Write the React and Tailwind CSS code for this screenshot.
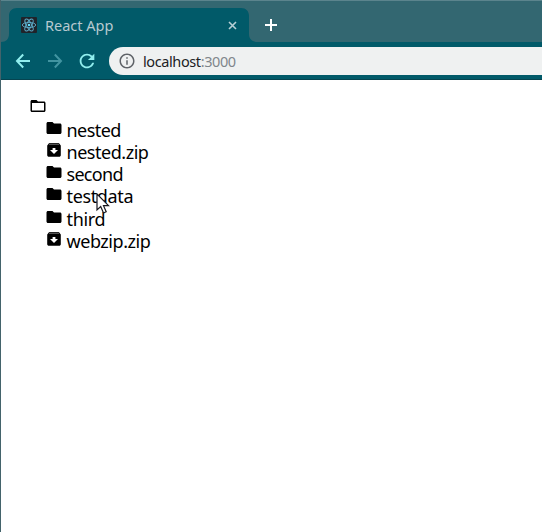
import React from "react";
import { MdFolder, MdFolderOpen, MdInfoOutline, MdRefresh } from "react-icons/md";

const entries = [
  { name: "nested", type: "folder", style: "tracking-[-0.55px]" },
  { name: "nested.zip", type: "archive", style: "tracking-[-0.47px]" },
  { name: "second", type: "folder", style: "tracking-[-0.7px]" },
  { name: "testdata", type: "folder", style: "tracking-[-0.35px]" },
  { name: "third", type: "folder", style: "tracking-[-0.35px]" },
  { name: "webzip.zip", type: "archive", style: "tracking-[-0.45px]" },
];

function ReactLogo() {
  return (
    <svg className="size-4 shrink-0 rounded-[1px] bg-[#20232a]" viewBox="0 0 16 16" fill="none" stroke="#5eaecb" strokeWidth="0.9">
      <ellipse cx="8" cy="8" rx="6.7" ry="2.6" />
      <ellipse cx="8" cy="8" rx="6.7" ry="2.6" transform="rotate(60 8 8)" />
      <ellipse cx="8" cy="8" rx="6.7" ry="2.6" transform="rotate(120 8 8)" />
      <circle cx="8" cy="8" r="1.3" fill="#61dafb" stroke="none" />
    </svg>
  );
}

function Arrow({ className }) {
  return (
    <svg className={className} viewBox="0 0 20 20" fill="none" stroke="currentColor" strokeWidth="2">
      <path d="M17 10H4.5M10.2 3.5L4 10L10.2 16.5" />
    </svg>
  );
}

function ArchiveIcon() {
  return (
    <svg className="mb-1 size-[18px]" viewBox="0 0 18 18">
      <path d="M4.2 2H13.8L15.8 4.5V14C15.8 15.2 15.1 15.8 14 15.8H4C2.9 15.8 2.2 15.2 2.2 14V4.5Z" />
      <path d="M4 3.2H14" stroke="#777" />
      <path d="M7.6 7H10.4V9H13L9 13L5 9H7.6Z" fill="white" />
    </svg>
  );
}

function TabStrip() {
  return (
    <div className="flex h-[42px] items-end border-t border-[#5b848d] bg-[#336771]">
      <div className="grid h-[34px] w-[257px] shrink-0">
        <svg className="col-start-1 row-start-1 h-[34px] w-[257px]" viewBox="0 0 257 34">
          <path d="M0 34C5 34 8 31 8 26V8C8 3 11 0 16 0H240C245 0 248 3 248 8V26C248 31 251 34 257 34Z" fill="#015a69" />
        </svg>
        <div className="col-start-1 row-start-1 flex items-center pl-5">
          <ReactLogo />
          <span className="ml-2 w-[183px] whitespace-nowrap text-[14.5px] leading-5 text-[#b7c9d0]">React App</span>
          <svg className="size-[9px]" viewBox="0 0 9 9" stroke="#b7cfd5" strokeWidth="1.6">
            <path d="M1 1L8 8M8 1L1 8" />
          </svg>
        </div>
      </div>
      <svg className="mb-[11px] ml-[7px] size-3" viewBox="0 0 12 12" stroke="white" strokeWidth="2">
        <path d="M6 0V12M0 6H12" />
      </svg>
    </div>
  );
}

function Toolbar() {
  return (
    <div className="flex h-[38px] items-center border-b border-[#064450] bg-[#015a69] pl-3">
      <Arrow className="size-5 text-[#91eeee]" />
      <Arrow className="ml-3 size-5 rotate-180 text-[#4194a1]" />
      <MdRefresh className="ml-[11px] size-[22px] text-[#91eeee]" />
      <div className="ml-[11px] flex h-7 flex-1 items-center rounded-l-full bg-[#eff1f1] pl-[9px]">
        <MdInfoOutline className="size-[18px] text-[#5f6368]" />
        <span className="ml-[7px] text-[14.5px] leading-5 tracking-[-0.4px] text-[#202124]">
          localhost<span className="text-[#80868b]">:3000</span>
        </span>
      </div>
    </div>
  );
}

export default function App() {
  return (
    <div className="h-[532px] w-[542px] overflow-hidden border-l border-[#43636b] bg-white font-['Noto_Sans',sans-serif]">
      <TabStrip />
      <Toolbar />
      <main className="pl-[27.5px] pt-[17px] text-black">
        <MdFolderOpen className="size-[18px]" />
        <ul className="pl-4 pt-[3.75px]">
          {entries.map((entry) => (
            <li key={entry.name} className="flex h-[22.2px] items-center">
              {entry.type === "folder" ? <MdFolder className="mb-1 size-[18px]" /> : <ArchiveIcon />}
              <span className={"ml-1 text-[18px] leading-[22px] " + entry.style}>{entry.name}</span>
            </li>
          ))}
        </ul>
      </main>
      <svg className="absolute left-[96px] top-[193px] h-[22px] w-[14px]" viewBox="0 0 14 22">
        <path d="M1 1V17L4.7 13.6L7.5 20L10.2 18.8L7.5 12.7H12.5Z" fill="white" stroke="#17171d" strokeWidth="1.2" />
      </svg>
    </div>
  );
}
